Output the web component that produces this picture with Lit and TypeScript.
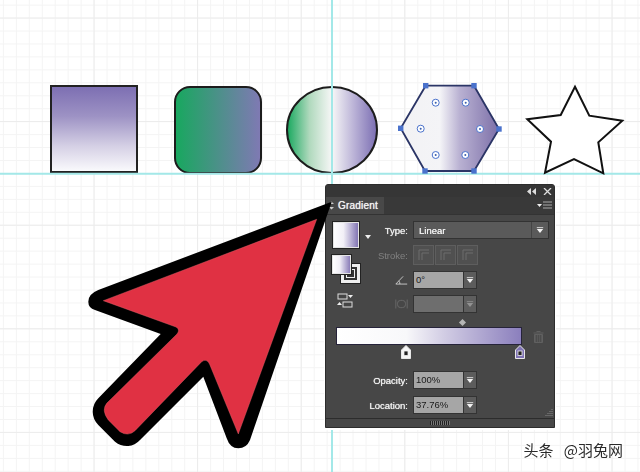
import { LitElement, html, svg, css } from "lit";
import { customElement } from "lit/decorators.js";

const caret = html`<svg class="caret" viewBox="0 0 10 8"><polygon points="1,2 9,2 5,7" fill="#f2f2f2"/><rect x="1" y="0" width="8" height="1" fill="#f2f2f2"/></svg>`;

@customElement("gradient-panel")
class GradientPanel extends LitElement {
  static styles = css`
    :host { display: flex; flex-direction: column; width: 230px; height: 244px; box-sizing: border-box;
      background: #474747; border: 1px solid #2c2c2c; border-top-left-radius: 3px; border-top-right-radius: 3px;
      box-shadow: 0 1px 0 1px #fff; font: 9.5px "Liberation Sans", Arial, sans-serif; color: #eee; filter: blur(.35px); }
    .top { height: 12px; background: #363636; display: flex; justify-content: flex-end; align-items: center; gap: 7px; padding-right: 2px; color: #ddd; font-size: 8px; }
    .top svg { width: 9px; height: 7px; }
    .tabs { height: 17px; background: #393939; display: flex; align-items: stretch; justify-content: space-between; border-bottom: 1px solid #333; }
    .tab { width: 58px; background: #484848; display: flex; align-items: center; box-sizing: border-box; padding-left: 2px; gap: 3px; color: #f2f2f2; font-size: 10px; text-shadow: 0 0 .8px #fff; letter-spacing: .02em; }
    .tab svg { width: 7px; height: 9px; }
    .menu { width: 15px; height: 9px; align-self: center; margin-right: 2px; }
    .upper { display: flex; padding: 6px 0 0 6px; }
    .swatches { width: 44px; display: flex; flex-direction: column; }
    .big-row { display: flex; align-items: center; gap: 5px; }
    .big { width: 28px; height: 28px; box-sizing: border-box; border: 1px solid #222; outline: 1px solid #e4e4e4; outline-offset: -2px; background: linear-gradient(90deg, #fff, #f2f0f7 40%, #7b6db0); }
    .tri { width: 6px; height: 4px; margin-top: 3px; }
    .stack { position: relative; width: 28px; height: 28px; margin-top: 6px; }
    .fillbox { position: absolute; left: 0; top: 0; width: 19px; height: 19px; box-sizing: border-box; border: 1px solid #e4e4e4; outline: 1px solid #222; background: linear-gradient(90deg, #fff, #f0eef6 40%, #8a7db8); }
    .strokebox { position: absolute; left: 9px; top: 9px; width: 19px; height: 19px; box-sizing: border-box; border: 3px solid #eee; outline: 1px solid #222; background: #333; }
    .strokebox::after { content: ""; position: absolute; inset: 2px; border: 1px solid #eee; }
    .mini { width: 16px; height: 15px; margin: 10px 0 0 5px; }
    .rows { display: grid; grid-template-columns: 32px auto; column-gap: 5px; row-gap: 6px; grid-auto-rows: min-content; align-items: center; }
    .lab { text-align: right; text-shadow: 0 0 .8px #fff; white-space: nowrap; justify-self: end; }
    .off { color: #808080; text-shadow: none; }
    .select { width: 136px; height: 18px; box-sizing: border-box; background: #5a5a5a; border: 1px solid #333; display: flex; align-items: center; justify-content: space-between; padding-left: 5px; color: #eee; text-shadow: 0 0 .6px #fff; }
    .select .b { width: 16px; height: 100%; border-left: 1px solid #444; display: flex; align-items: center; justify-content: center; }
    .caret { width: 8px; height: 7px; }
    .btns { display: flex; gap: 1px; height: 20px; margin-top: 0; }
    .btn { width: 21px; height: 20px; box-sizing: border-box; background: #505050; border: 1px solid #5e5e5e; display: flex; align-items: center; justify-content: center; }
    .btn svg { width: 14px; height: 14px; }
    .combo { display: flex; height: 18px; width: 64px; box-sizing: border-box; border: 1px solid #333; }
    .val { width: 50px; background: #a6a6a6; color: #1a1a1a; padding-left: 2px; font-size: 9.5px; line-height: 15px; box-sizing: border-box; border-right: 1px solid #333; }
    .drop { flex: 1; background: #5c5c5c; display: flex; align-items: center; justify-content: center; }
    .dis .val { background: #6e6e6e; }
    .dis .drop { background: #5e5e5e; }
    .dis .caret { opacity: .35; }
    .icon { width: 13px; height: 12px; justify-self: end; }
    .ramp { position: relative; margin: 14px 0 0 10px; width: 186px; height: 18px; box-sizing: border-box; border: 1px solid #26233a;
      background: linear-gradient(90deg, #fff, #f8f8fa 37.76%, #d2cde4 58%, #8b7fbd); }
    .dia { position: absolute; left: 123px; top: -8px; width: 5px; height: 5px; background: #b5b5b5; transform: rotate(45deg); }
    .stop { position: absolute; top: 17px; width: 10px; height: 14px; }
    .trash { position: absolute; left: 196px; top: 2px; width: 11px; height: 13px; }
    .lower { display: grid; grid-template-columns: 82px auto; column-gap: 5px; row-gap: 7px; margin-top: 26px; align-items: center; }
    .lower .combo { height: 18px; }
    .spacer { flex: 1; position: relative; }
    .grip { position: absolute; right: 1px; bottom: 1px; width: 9px; height: 9px; }
    .foot { height: 8px; border-top: 1px solid #2c2c2c; background: #474747; display: flex; justify-content: center; align-items: center; }
    .foot i { width: 20px; height: 4px; background: repeating-linear-gradient(90deg, #222 0 1px, #777 1px 2px); }
  `;
  render() {
    const corner = html`<svg viewBox="0 0 14 14"><path d="M2 12V2H12M5 12V5H12" fill="none" stroke="#6c6c6c"/></svg>`;
    const stop = (x: number, fill: string) => html`<svg class="stop" style="left:${x}px" viewBox="0 0 10 14"><path d="M5 .5L9.5 5V13.5H.5V5Z" fill="${fill}" stroke="#e8e8e8"/><rect x="3" y="6" width="4" height="4.5" fill="#222" stroke="#eee" stroke-width=".8"/></svg>`;
    return html`
      <div class="top">
        <svg viewBox="0 0 9 7"><path d="M4 0V7L0 3.5ZM9 0V7L5 3.5Z" fill="#ddd"/></svg>
        <svg viewBox="0 0 9 7"><path d="M1 0L8 7M8 0L1 7" stroke="#ddd" stroke-width="1.3"/></svg>
      </div>
      <div class="tabs">
        <div class="tab"><svg viewBox="0 0 7 9"><path d="M3.5 .5L6 3H1ZM3.5 8.5L1 6H6Z" fill="#ccc"/></svg><span>Gradient</span></div>
        <svg class="menu" viewBox="0 0 15 9"><path d="M0 3H5L2.500 6Z" fill="#eee"/><path d="M6 1H15M6 4H15M6 7H15" stroke="#aaa"/></svg>
      </div>
      <div class="upper">
        <div class="swatches">
          <div class="big-row"><div class="big"></div>
            <svg class="tri" viewBox="0 0 6 4"><polygon points="0,0 6,0 3,4" fill="#eee"/></svg></div>
          <div class="stack"><div class="strokebox"></div><div class="fillbox"></div></div>
          <svg class="mini" viewBox="0 0 16 15"><rect x="1" y="1" width="9" height="5" fill="#444" stroke="#ddd"/><path d="M11 2H16L13.500 5Z" fill="#eee"/><rect x="6" y="9" width="9" height="5" fill="#444" stroke="#ddd"/><path d="M0 12H5L2.500 9Z" fill="#eee"/></svg>
        </div>
        <div class="rows">
          <span class="lab">Type:</span>
          <div class="select"><span>Linear</span><span class="b">${caret}</span></div>
          <span class="lab off">Stroke:</span>
          <div class="btns"><div class="btn">${corner}</div><div class="btn">${corner}</div><div class="btn">${corner}</div></div>
          <svg class="icon" viewBox="0 0 16 13"><path d="M1 11.500H15M1 11.500L10 2M6 11.500C6 9.500 5.500 8.500 4.500 7.500" fill="none" stroke="#ddd"/></svg>
          <div class="combo"><div class="val">0°</div><div class="drop">${caret}</div></div>
          <svg class="icon" viewBox="0 0 16 13"><rect x="3" y="2" width="10" height="9" rx="4" fill="none" stroke="#6f6f6f"/><path d="M1 1V12M15 1V12" stroke="#6f6f6f"/></svg>
          <div class="combo dis"><div class="val"></div><div class="drop">${caret}</div></div>
        </div>
      </div>
      <div class="ramp">
        <div class="dia"></div>
        ${stop(64, "#f6f6f6")}${stop(178, "#8074b5")}
        <svg class="trash" viewBox="0 0 11 13"><path d="M3.500 1.500H7.500M.5 3H10.500M1.500 4.500H9.500V12.500H1.500Z" fill="#585858" stroke="#606060"/><path d="M3.500 5V12M5.500 5V12M7.500 5V12" stroke="#4c4c4c"/></svg>
      </div>
      <div class="lower">
        <span class="lab">Opacity:</span>
        <div class="combo"><div class="val">100%</div><div class="drop">${caret}</div></div>
        <span class="lab">Location:</span>
        <div class="combo"><div class="val">37.76%</div><div class="drop">${caret}</div></div>
      </div>
      <div class="spacer"><svg class="grip" viewBox="0 0 9 9"><path d="M8 1V2M6 3V4M8 3V4M4 5V6M6 5V6M8 5V6M2 7V8M4 7V8M6 7V8M8 7V8" stroke="#888"/></svg></div>
      <div class="foot"><i></i></div>
    `;
  }
}

@customElement("app-root")
class AppRoot extends LitElement {
  static styles = css`
    :host { display: block; position: relative; width: 640px; height: 472px; overflow: hidden; background: #fff; }
    .art { position: absolute; left: 0; top: 0; width: 640px; height: 472px; filter: blur(.3px); }
    gradient-panel { position: absolute; left: 325px; top: 184px; }
    .mark { position: absolute; right: 17px; top: 440px; font: 15px "Noto Sans CJK SC", "Liberation Sans", sans-serif; color: #2a2a2a; word-spacing: 7px; text-shadow: 0 0 2px #fff; white-space: nowrap; line-height: 19px; }
  `;
  render() {
    const minorX = Array.from({ length: 50 }, (_, i) => 3.4 + i * 12.95);
    const minorY = Array.from({ length: 37 }, (_, i) => 5.1 + i * 12.95);
    const hex: [number, number][] = [[425.7, 85.7], [474, 85.7], [499, 129], [474, 171], [425, 171], [400.7, 128.3]];
    const dots = [[435.7, 102.7], [465.7, 102.7], [420.7, 128.7], [480, 129], [435.7, 155], [465.3, 155]];
    return html`
      <svg class="art" viewBox="0 0 640 472">
        <defs>
          <linearGradient id="g1" x1="0" y1="0" x2="0" y2="1"><stop offset="0" stop-color="#7c6eb2"/><stop offset=".35" stop-color="#9d92c4"/><stop offset=".7" stop-color="#d5d0e5"/><stop offset="1" stop-color="#fbfbfd"/></linearGradient>
          <linearGradient id="g2"><stop offset="0" stop-color="#17a85e"/><stop offset="1" stop-color="#8079b4"/></linearGradient>
          <linearGradient id="g3"><stop offset="0" stop-color="#17a85e"/><stop offset=".25" stop-color="#b0d9bd"/><stop offset=".5" stop-color="#f7f7f7"/><stop offset=".75" stop-color="#b9b1d6"/><stop offset="1" stop-color="#7a6db2"/></linearGradient>
          <linearGradient id="g4"><stop offset="0" stop-color="#f2f2f4"/><stop offset=".4" stop-color="#f4f4f7"/><stop offset=".6" stop-color="#b9b1d2"/><stop offset="1" stop-color="#7c6fa8"/></linearGradient>
        </defs>
        ${minorX.map((x) => svg`<path d="M${x} 0V472" stroke="#f4f4f4"/>`)}
        ${minorY.map((y) => svg`<path d="M0 ${y}H640" stroke="#f4f4f4"/>`)}
        ${[94, 197.6, 301.2, 404.8, 508.4, 612].map((x) => svg`<path d="M${x} 0V472" stroke="#ececec"/>`)}
        ${[18, 121.6, 225.2, 328.8, 432.4].map((y) => svg`<path d="M0 ${y}H640" stroke="#ececec"/>`)}

        <rect x="51" y="86" width="86" height="86" fill="url(#g1)" stroke="#222" stroke-width="2"/>
        <rect x="175" y="87" width="86" height="86" rx="15" fill="url(#g2)" stroke="#1c1c1c" stroke-width="2"/>
        <ellipse cx="332" cy="130" rx="45" ry="43" fill="url(#g3)" stroke="#1c1c1c" stroke-width="2"/>
        <path d="M0 173.700H640M332 0V472" stroke="#a3e8e8" stroke-width="2" fill="none"/>
        <polygon points="${hex.map((p) => p.join(",")).join(" ")}" fill="url(#g4)" stroke="#2b3566" stroke-width="1.800"/>
        ${hex.map(([x, y]) => svg`<rect x="${x - 2.7}" y="${y - 2.7}" width="5.400" height="5.400" fill="#4a72cc"/>`)}
        ${dots.map(([x, y]) => svg`<circle cx="${x}" cy="${y}" r="3.500" fill="#fff" stroke="#4a72cc"/><circle cx="${x}" cy="${y}" r="1" fill="#3b5fae"/>`)}
        <polygon points="575,86.700 589.300,115.700 622.300,120.700 598.300,142.300 603.300,173.300 574,159 545,172.700 551,141.700 527.300,119.300 560.700,115" fill="#fff" stroke="#111" stroke-width="2" stroke-linejoin="miter"/>
      </svg>
      <gradient-panel></gradient-panel>
      <svg class="art" viewBox="0 0 640 472">
        <path d="M331.700 201.700L98.300 290Q88.300 294 88.300 301.700Q88.300 308 95 310L160.700 334L98.300 398.300Q92.700 404 92.700 411.700Q92.700 419 98.300 425L115 441.700Q121 446.500 128.300 446Q135 445.500 140 440L203.300 376.700L226.700 438.300Q230 448.300 238.300 448.300Q246.500 448.300 250 440Z" fill="#000"/>
        <path d="M316.700 219.300L103.300 300.700L176 327Q180.500 329.500 177 334L106.700 403.300Q101 410 108.300 420L120 431.700Q128.300 437 135 430.700L201.700 361.700Q206.500 358 209.500 364L238.300 434Z" fill="#e03143" stroke="#e86a72" stroke-width=".4"/>
      </svg>
      <div class="mark">头条 @羽兔网</div>
    `;
  }
}
